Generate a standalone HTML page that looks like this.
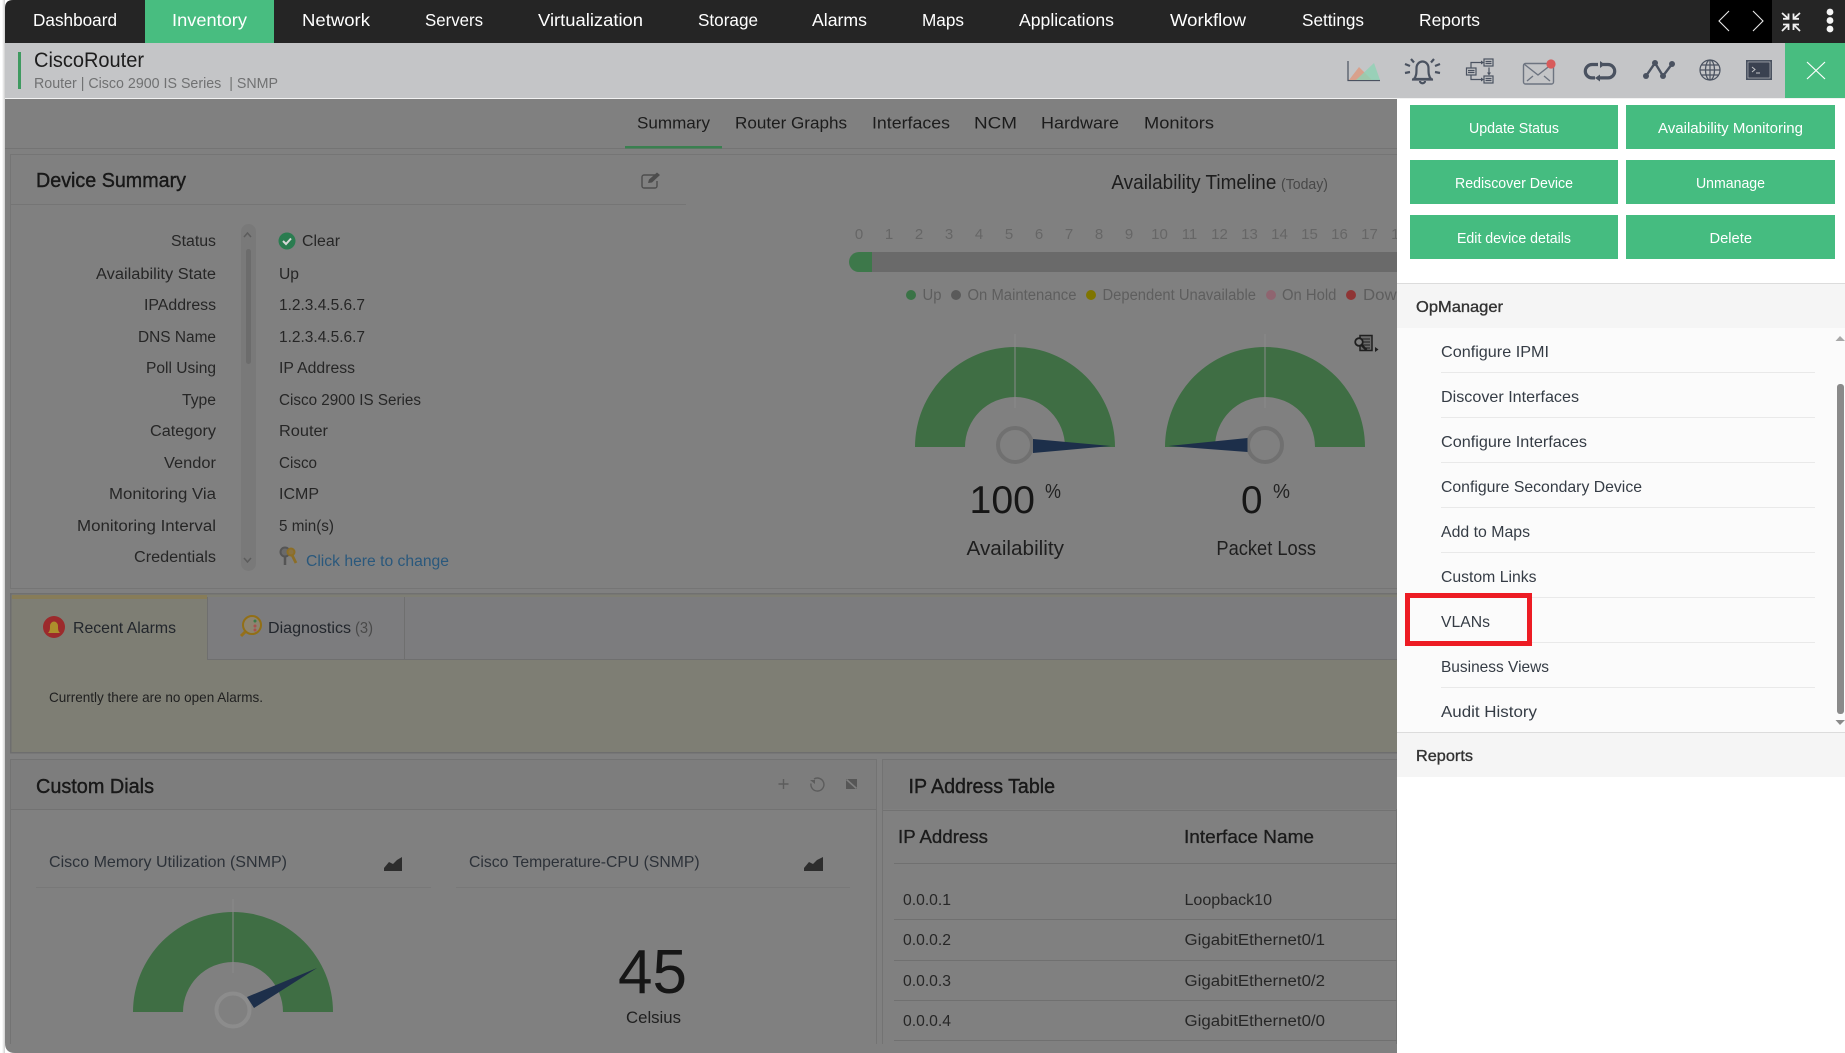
<!DOCTYPE html>
<html><head><meta charset="utf-8"><title>CiscoRouter</title>
<style>
html,body{margin:0;padding:0;width:1845px;height:1053px;overflow:hidden;background:#fff}
svg{display:block;position:absolute;left:0;top:0}
text{font-family:"Liberation Sans",sans-serif;white-space:pre}
.n{font-size:17.5px;fill:#fff}
.l{font-size:15.5px;fill:#262626}
.t{font-size:16.5px;fill:#1c1c1c}
.h{font-size:20.5px;fill:#181818;stroke:#181818;stroke-width:.4px}
.b{font-size:15px;fill:#fff}
.m{font-size:16px;fill:#353c45}
.mh{font-size:16px;fill:#333;stroke:#333;stroke-width:.35px}
.hr{font-size:15px;fill:#666}
.lg{font-size:15.5px;fill:#5e5e5e}
.i{fill:none;stroke:#4a5260;stroke-width:1.6}
</style></head><body>
<svg width="1845" height="1053" viewBox="0 0 1845 1053" xmlns="http://www.w3.org/2000/svg">
<defs>
<clipPath id="main"><rect x="5" y="99" width="1392" height="954"/></clipPath>
<linearGradient id="sh" x1="0" x2="1"><stop offset="0" stop-color="#fff"/><stop offset="1" stop-color="#cfcfcf"/></linearGradient>
</defs>
<rect width="1845" height="1053" fill="#fff"/>
<rect x="2" y="0" width="3" height="1053" fill="url(#sh)"/>
<path d="M5 99H1397V1053H15Q5 1053 5 1043Z" fill="#808080"/>
<!-- nav -->
<path d="M5 43V8Q5 0 13 0H1845V43Z" fill="#252525"/>
<rect x="145" y="0" width="129" height="43" fill="#48bd80"/>
<rect x="1710" y="0" width="62" height="43" fill="#000"/>
<g>
<text class="n" x="33" y="26" textLength="84" lengthAdjust="spacingAndGlyphs">Dashboard</text>
<text class="n" x="172" y="26" textLength="75" lengthAdjust="spacingAndGlyphs">Inventory</text>
<text class="n" x="302" y="26" textLength="68" lengthAdjust="spacingAndGlyphs">Network</text>
<text class="n" x="425" y="26" textLength="58" lengthAdjust="spacingAndGlyphs">Servers</text>
<text class="n" x="538" y="26" textLength="105" lengthAdjust="spacingAndGlyphs">Virtualization</text>
<text class="n" x="698" y="26" textLength="60" lengthAdjust="spacingAndGlyphs">Storage</text>
<text class="n" x="812" y="26" textLength="55" lengthAdjust="spacingAndGlyphs">Alarms</text>
<text class="n" x="922" y="26" textLength="42" lengthAdjust="spacingAndGlyphs">Maps</text>
<text class="n" x="1019" y="26" textLength="95" lengthAdjust="spacingAndGlyphs">Applications</text>
<text class="n" x="1170" y="26" textLength="76" lengthAdjust="spacingAndGlyphs">Workflow</text>
<text class="n" x="1302" y="26" textLength="62" lengthAdjust="spacingAndGlyphs">Settings</text>
<text class="n" x="1419" y="26" textLength="61" lengthAdjust="spacingAndGlyphs">Reports</text>
</g>
<g fill="none" stroke="#e8e8e8" stroke-width="1.1">
<path d="M1729 11L1719 21L1729 31"/>
<path d="M1753 11L1763 21L1753 31"/>
</g>
<g fill="none" stroke="#f0f0f0" stroke-width="1.8">
<path d="M1782 13L1788.500 18.800M1788.500 13.500V18.800H1783"/>
<path d="M1800 13L1793.500 18.800M1793.500 13.500V18.800H1799"/>
<path d="M1782 31L1788.500 24.500M1788.500 30V24.500H1783"/>
<path d="M1800 31L1793.500 24.500M1793.500 30V24.500H1799"/>
</g>
<g fill="#f4f4f4"><circle cx="1830" cy="12" r="3.400"/><circle cx="1830" cy="20.500" r="3.400"/><circle cx="1830" cy="29" r="3.400"/></g>
<!-- header band -->
<rect x="5" y="43" width="1840" height="55" fill="#c4c5c7"/>
<rect x="5" y="98" width="1840" height="1" fill="#f2f2f2"/>
<rect x="18" y="52" width="3" height="37" fill="#3f9a60"/>
<text x="34" y="67" font-size="21" fill="#1d1d1d" textLength="110" lengthAdjust="spacingAndGlyphs">CiscoRouter</text>
<text x="34" y="88" font-size="15" fill="#707172" textLength="244" lengthAdjust="spacingAndGlyphs">Router | Cisco 2900 IS Series  | SNMP</text>
<!-- header icons -->
<path d="M1348 61V80.500H1380" fill="none" stroke="#4a5260" stroke-width="1.200"/>
<path d="M1349 80L1359 67L1372 80Z" fill="#d9a18c"/>
<path d="M1356 80L1374 63L1380 80Z" fill="#8ed2b4" fill-opacity=".8"/>
<path class="i" d="M1414 79c2.500-3 2.500-6 2.500-11a6 6.500 0 0 1 12 0c0 5 0 8 2.500 11zM1412 79.500h21M1420 81c0 3 5 3 5 0" style="stroke-width:2.200"/>
<path class="i" d="M1405 64l5 2M1411 59l3 3.500M1434 59l-3 3.500M1440 64l-5 2M1405 73l5-1M1440 73l-5-1" style="stroke-width:2.200"/>
<g fill="none" stroke="#4a5260" stroke-width="1.200">
<rect x="1484" y="59" width="9" height="7"/><rect x="1466.500" y="68" width="9.500" height="7"/><rect x="1484" y="76" width="9" height="7"/>
<path d="M1485.500 61.500h6M1485.500 63.500h6M1468 70.500h6.500M1468 72.500h6.500M1485.500 78.500h6M1485.500 80.500h6"/>
<path d="M1471 68v-5.500h10M1471 75v4.500h10M1489 67.500v7"/>
</g>
<path d="M1481 60.500l3 2-3 2zM1481 77.500l3 2-3 2zM1487 72.500h4l-2 3z" fill="#4a5260"/>
<g fill="none" stroke="#6d7480" stroke-width="1.400"><rect x="1523.500" y="63.500" width="30" height="20.500" rx="2"/><path d="M1524 64L1538 75L1552 64M1527 81l6-5M1550 81l-6-5"/></g>
<circle cx="1551" cy="64" r="4.600" fill="#d85b5b"/>
<path d="M1598 64.500H1592a6.700 6.700 0 0 0 0 13.400H1595M1600 77.900H1608a6.700 6.700 0 0 0 0-13.400H1603" fill="none" stroke="#4a5260" stroke-width="3.200"/>
<path d="M1600 61l5 3.500-5 3.500zM1600 74.500l-5 3.500 5 3.500z" fill="#4a5260"/>
<path d="M1646 76L1655 63L1663 76L1672 64" fill="none" stroke="#4a5260" stroke-width="2.400"/>
<g fill="#4a5260"><circle cx="1646" cy="76" r="3"/><circle cx="1655" cy="63" r="3"/><circle cx="1663" cy="76" r="3"/><circle cx="1672" cy="64" r="3"/></g>
<g fill="none" stroke="#4a5260" stroke-width="1.200"><circle cx="1710" cy="70" r="10"/><ellipse cx="1710" cy="70" rx="4.500" ry="10"/><path d="M1710 60v20M1700 70h20M1701.500 65h17M1701.500 75h17"/></g>
<rect x="1746" y="60" width="26" height="20" fill="#4a5260"/><rect x="1748" y="62" width="22" height="16" fill="#3a4150" stroke="#c4c5c7" stroke-width=".6"/>
<path d="M1752 67l3 2.500-3 2.500M1756 73h4" fill="none" stroke="#c4c5c7" stroke-width="1"/>
<rect x="1785" y="43" width="60" height="55" fill="#48bd80"/>
<path d="M1807 62L1825 79M1825 62L1807 79" stroke="#fff" stroke-width="1.200"/>

<!-- main content -->
<g clip-path="url(#main)">
<rect x="5" y="148" width="1392" height="1" fill="#747474"/>
<rect x="625" y="146" width="97" height="2.500" fill="#3a8050"/>
<text class="t" x="637" y="128.500" textLength="73" lengthAdjust="spacingAndGlyphs">Summary</text>
<text class="t" x="735" y="128.500" textLength="112" lengthAdjust="spacingAndGlyphs">Router Graphs</text>
<text class="t" x="872" y="128.500" textLength="78" lengthAdjust="spacingAndGlyphs">Interfaces</text>
<text class="t" x="974" y="128.500" textLength="43" lengthAdjust="spacingAndGlyphs">NCM</text>
<text class="t" x="1041" y="128.500" textLength="78" lengthAdjust="spacingAndGlyphs">Hardware</text>
<text class="t" x="1144" y="128.500" textLength="70" lengthAdjust="spacingAndGlyphs">Monitors</text>
<!-- Device Summary panel -->
<path d="M1397 154.500H10.500V588.500H1397" fill="none" stroke="#757575"/>
<rect x="11" y="204" width="675" height="1" fill="#757575"/>
<text class="h" x="36" y="187" textLength="150" lengthAdjust="spacingAndGlyphs">Device Summary</text>
<path d="M655 175h-11a2 2 0 0 0-2 2v9a2 2 0 0 0 2 2h11a2 2 0 0 0 2-2v-5" fill="none" stroke="#4d4d4d" stroke-width="1.400"/>
<path d="M648 183l1-3.500 8-7 3 2.500-8 7.500z" fill="#4d4d4d"/>
<!-- rows -->
<text class="l" x="171" y="246" textLength="45" lengthAdjust="spacingAndGlyphs">Status</text>
<text class="l" x="96" y="279" textLength="120" lengthAdjust="spacingAndGlyphs">Availability State</text>
<text class="l" x="144" y="310" textLength="72" lengthAdjust="spacingAndGlyphs">IPAddress</text>
<text class="l" x="138" y="342" textLength="78" lengthAdjust="spacingAndGlyphs">DNS Name</text>
<text class="l" x="146" y="373" textLength="70" lengthAdjust="spacingAndGlyphs">Poll Using</text>
<text class="l" x="182" y="405" textLength="34" lengthAdjust="spacingAndGlyphs">Type</text>
<text class="l" x="150" y="436" textLength="66" lengthAdjust="spacingAndGlyphs">Category</text>
<text class="l" x="164" y="468" textLength="52" lengthAdjust="spacingAndGlyphs">Vendor</text>
<text class="l" x="109" y="499" textLength="107" lengthAdjust="spacingAndGlyphs">Monitoring Via</text>
<text class="l" x="77" y="531" textLength="139" lengthAdjust="spacingAndGlyphs">Monitoring Interval</text>
<text class="l" x="134" y="562" textLength="82" lengthAdjust="spacingAndGlyphs">Credentials</text>
<circle cx="287" cy="241" r="8.500" fill="#2a7c50"/><path d="M283 241l3 3 5-5.500" fill="none" stroke="#d8d8d8" stroke-width="2"/>
<text class="l" x="302" y="246" textLength="38" lengthAdjust="spacingAndGlyphs">Clear</text>
<text class="l" x="279" y="279" textLength="20" lengthAdjust="spacingAndGlyphs">Up</text>
<text class="l" x="279" y="310" textLength="86" lengthAdjust="spacingAndGlyphs">1.2.3.4.5.6.7</text>
<text class="l" x="279" y="342" textLength="86" lengthAdjust="spacingAndGlyphs">1.2.3.4.5.6.7</text>
<text class="l" x="279" y="373" textLength="76" lengthAdjust="spacingAndGlyphs">IP Address</text>
<text class="l" x="279" y="405" textLength="142" lengthAdjust="spacingAndGlyphs">Cisco 2900 IS Series</text>
<text class="l" x="279" y="436" textLength="49" lengthAdjust="spacingAndGlyphs">Router</text>
<text class="l" x="279" y="468" textLength="38" lengthAdjust="spacingAndGlyphs">Cisco</text>
<text class="l" x="279" y="499" textLength="40" lengthAdjust="spacingAndGlyphs">ICMP</text>
<text class="l" x="279" y="531" textLength="55" lengthAdjust="spacingAndGlyphs">5 min(s)</text>
<circle cx="285" cy="552" r="4.500" fill="#6a6a6a" stroke="#555" stroke-width="2"/><path d="M285 556v9" stroke="#555" stroke-width="2.500"/>
<circle cx="291" cy="552" r="3.500" fill="#8a7240" stroke="#8c6e26" stroke-width="2"/><path d="M292 555l4 8" stroke="#8c6e26" stroke-width="2.800"/>
<text class="l" x="306" y="566" style="fill:#2a587c" textLength="143" lengthAdjust="spacingAndGlyphs">Click here to change</text>
<rect x="241" y="224" width="15" height="347" rx="7.500" fill="#797979"/>
<rect x="246" y="249" width="5" height="115" rx="2.500" fill="#6c6c6c"/>
<path d="M244 237l3.500-4 3.500 4M244 558l3.500 4 3.500-4" fill="none" stroke="#5c5c5c" stroke-width="1.500"/>
<!-- timeline -->
<text x="1111.400" y="189" font-size="20" fill="#1d1d1d" textLength="165" lengthAdjust="spacingAndGlyphs">Availability Timeline</text>
<text x="1281" y="189" font-size="15" fill="#474747" textLength="47" lengthAdjust="spacingAndGlyphs">(Today)</text>
<g text-anchor="middle">
<text class="hr" x="859" y="239">0</text><text class="hr" x="889" y="239">1</text><text class="hr" x="919" y="239">2</text><text class="hr" x="949" y="239">3</text><text class="hr" x="979" y="239">4</text><text class="hr" x="1009" y="239">5</text><text class="hr" x="1039" y="239">6</text><text class="hr" x="1069" y="239">7</text><text class="hr" x="1099" y="239">8</text><text class="hr" x="1129" y="239">9</text><text class="hr" x="1159.500" y="239">10</text><text class="hr" x="1189.500" y="239">11</text><text class="hr" x="1219.500" y="239">12</text><text class="hr" x="1249.500" y="239">13</text><text class="hr" x="1279.500" y="239">14</text><text class="hr" x="1309.500" y="239">15</text><text class="hr" x="1339.500" y="239">16</text><text class="hr" x="1369.500" y="239">17</text><text class="hr" x="1399.500" y="239">18</text>
</g>
<rect x="860" y="252" width="537" height="20" fill="#6a6a6a"/>
<path d="M872 252H859a10 10 0 0 0 0 20H872Z" fill="#3d784a"/>
<circle cx="911" cy="295" r="5" fill="#3a7346"/><text class="lg" x="922.500" y="300" textLength="19" lengthAdjust="spacingAndGlyphs">Up</text>
<circle cx="956" cy="295" r="5" fill="#5a5a5a"/><text class="lg" x="967.500" y="300" textLength="109" lengthAdjust="spacingAndGlyphs">On Maintenance</text>
<circle cx="1091" cy="295" r="5" fill="#7f7500"/><text class="lg" x="1102.500" y="300" textLength="153.500" lengthAdjust="spacingAndGlyphs">Dependent Unavailable</text>
<circle cx="1271" cy="295" r="5" fill="#8f6570"/><text class="lg" x="1282" y="300" textLength="54.400" lengthAdjust="spacingAndGlyphs">On Hold</text>
<circle cx="1351" cy="295" r="5" fill="#8f3535"/><text class="lg" x="1363" y="300" textLength="43" lengthAdjust="spacingAndGlyphs">Down</text>
<!-- gauges -->
<path d="M915 447a100 100 0 0 1 200 0H1065a50 50 0 0 0-100 0Z" fill="#3f6e44"/>
<rect x="1014.500" y="334" width="1" height="74" fill="#8a8a8a"/>
<circle cx="1015" cy="445" r="17" fill="#808080" stroke="#707070" stroke-width="4"/>
<path d="M1033 439L1111 446L1033 453Z" fill="#1d2f4a"/>
<path d="M1165 447a100 100 0 0 1 200 0H1315a50 50 0 0 0-100 0Z" fill="#3f6e44"/>
<rect x="1264.500" y="334" width="1" height="74" fill="#8a8a8a"/>
<circle cx="1265" cy="445" r="17" fill="#808080" stroke="#707070" stroke-width="4"/>
<path d="M1247.500 438L1168.500 446L1247.500 452Z" fill="#1d2f4a"/>
<text x="969.500" y="513" font-size="39" fill="#161616" textLength="65.500" lengthAdjust="spacingAndGlyphs">100</text>
<text x="1045" y="498" font-size="20" fill="#222" textLength="16" lengthAdjust="spacingAndGlyphs">%</text>
<text x="1241" y="513" font-size="39" fill="#161616" textLength="21.500" lengthAdjust="spacingAndGlyphs">0</text>
<text x="1273" y="498" font-size="20" fill="#222" textLength="17" lengthAdjust="spacingAndGlyphs">%</text>
<text x="966.500" y="555" font-size="20" fill="#1f1f1f" textLength="97.500" lengthAdjust="spacingAndGlyphs">Availability</text>
<text x="1216.400" y="555" font-size="20" fill="#1f1f1f" textLength="99.600" lengthAdjust="spacingAndGlyphs">Packet Loss</text>
<!-- report icon -->
<rect x="1360" y="335.500" width="12" height="15" fill="#6a6a6a" stroke="#1f1f1f" stroke-width="1.500"/>
<path d="M1362 339h8M1362 342h8M1363 345h7M1365 348h5" stroke="#1f1f1f" stroke-width="1"/>
<circle cx="1359" cy="342" r="3.800" fill="#808080" stroke="#1f1f1f" stroke-width="1.800"/>
<path d="M1361.500 345l5 5" stroke="#1f1f1f" stroke-width="2.400"/>
<path d="M1375 347l3.500 2.500-3.500 2.500z" fill="#1f1f1f"/>
<!-- Alarms -->
<rect x="11" y="594" width="1386" height="159" fill="#7e7e74"/>
<rect x="207" y="597" width="1190" height="62" fill="#7c7c7e"/>
<rect x="207" y="659" width="1190" height="1" fill="#6f6f6f"/>
<rect x="207" y="597" width="1" height="62" fill="#6f6f6f"/>
<rect x="404" y="597" width="1" height="62" fill="#6f6f6f"/>
<rect x="10" y="593" width="1387" height="1.500" fill="#707070"/>
<rect x="10" y="593" width="1.500" height="160" fill="#6e6e6e"/>
<rect x="10" y="752" width="1387" height="1.500" fill="#6e6e6e"/>
<rect x="12" y="595" width="195" height="4" fill="#877c58"/>
<circle cx="54" cy="627" r="11" fill="#9c2a2c"/>
<path d="M48 633c2-2 2-4 2-7a4 4.500 0 0 1 8 0c0 3 0 5 2 7z" fill="#ad8f2c"/>
<text class="l" x="73" y="633" style="font-size:16px;fill:#22262c" textLength="103" lengthAdjust="spacingAndGlyphs">Recent Alarms</text>
<circle cx="252" cy="625" r="9" fill="#8d8470" stroke="#926f16" stroke-width="2"/>
<path d="M245 632l-4 4" stroke="#96701a" stroke-width="3"/>
<circle cx="255" cy="621" r="1.500" fill="#3a7a4a"/><circle cx="255" cy="626" r="1.500" fill="#a85050"/><circle cx="255" cy="630" r="1.500" fill="#a85050"/>
<text class="l" x="268" y="633" style="font-size:16px;fill:#22262c" textLength="83" lengthAdjust="spacingAndGlyphs">Diagnostics</text>
<text class="l" x="355" y="633" style="font-size:16px;fill:#4a4a4a" textLength="18" lengthAdjust="spacingAndGlyphs">(3)</text>
<text x="49" y="702" font-size="14" fill="#1f1f1f" textLength="214" lengthAdjust="spacingAndGlyphs">Currently there are no open Alarms.</text>
<!-- Custom Dials panel -->
<rect x="10.500" y="759.500" width="866" height="300" fill="#808080" stroke="#737373"/>
<rect x="11" y="760" width="865" height="49" fill="#7d7d7d"/>
<rect x="11" y="809" width="865" height="1" fill="#727272"/>
<text class="h" x="36" y="793" textLength="118" lengthAdjust="spacingAndGlyphs">Custom Dials</text>
<path d="M778.500 784h10M783.500 779v10" stroke="#5c5c5c" stroke-width="1.400"/>
<path d="M814 779a6.500 6.500 0 1 1-3 4.500" fill="none" stroke="#5c5c5c" stroke-width="1.400"/><path d="M810 780h5v4z" fill="#5c5c5c"/>
<rect x="846" y="779" width="11" height="10" fill="#565656"/><path d="M846.500 779.500L856.500 788.500" stroke="#808080" stroke-width="1.600"/>
<text class="l" x="49" y="867" style="font-size:16px;fill:#2c3138" textLength="238" lengthAdjust="spacingAndGlyphs">Cisco Memory Utilization (SNMP)</text>
<path d="M384 871V868L389 862L393 864L397 860L402 857V871Z" fill="#2d2d2d"/>
<rect x="36" y="887" width="395" height="1" fill="#787878"/>
<text class="l" x="469" y="867" style="font-size:16px;fill:#2c3138" textLength="230.600" lengthAdjust="spacingAndGlyphs">Cisco Temperature-CPU (SNMP)</text>
<path d="M804 871V868L809 862L813 864L817 860L823 857V871Z" fill="#2d2d2d"/>
<rect x="456" y="887" width="394" height="1" fill="#787878"/>
<path d="M133 1012a100 100 0 0 1 200 0H283a50 50 0 0 0-100 0Z" fill="#3f6e44"/>
<rect x="232.500" y="899" width="1" height="74" fill="#8a8a8a"/>
<circle cx="233" cy="1010" r="16.500" fill="#808080" stroke="#8c8c8c" stroke-width="4"/>
<path d="M247 997L317 968L254 1008Z" fill="#1d2f4a"/>
<text x="618" y="993" font-size="62" fill="#161616" textLength="69" lengthAdjust="spacingAndGlyphs">45</text>
<text x="626" y="1023" font-size="17" fill="#1f1f1f" textLength="55" lengthAdjust="spacingAndGlyphs">Celsius</text>
<!-- IP table -->
<rect x="882.500" y="759.500" width="514" height="300" fill="#808080" stroke="#737373"/>
<rect x="883" y="760" width="514" height="49" fill="#7d7d7d"/>
<rect x="883" y="810" width="514" height="1" fill="#727272"/>
<text class="h" x="908.500" y="793" textLength="146.500" lengthAdjust="spacingAndGlyphs">IP Address Table</text>
<text x="898" y="843" font-size="18" fill="#1b1b1b" stroke="#1b1b1b" stroke-width=".3" textLength="90" lengthAdjust="spacingAndGlyphs">IP Address</text>
<text x="1184" y="843" font-size="18" fill="#1b1b1b" stroke="#1b1b1b" stroke-width=".3" textLength="130" lengthAdjust="spacingAndGlyphs">Interface Name</text>
<rect x="894" y="863" width="503" height="1" fill="#707070"/>
<rect x="894" y="919" width="503" height="1" fill="#707070"/>
<rect x="894" y="960" width="503" height="1" fill="#707070"/>
<rect x="894" y="1000" width="503" height="1" fill="#707070"/>
<rect x="894" y="1040" width="503" height="1" fill="#707070"/>
<text class="l" x="903" y="905" textLength="48" lengthAdjust="spacingAndGlyphs">0.0.0.1</text>
<text class="l" x="903" y="945" textLength="48" lengthAdjust="spacingAndGlyphs">0.0.0.2</text>
<text class="l" x="903" y="986" textLength="48" lengthAdjust="spacingAndGlyphs">0.0.0.3</text>
<text class="l" x="903" y="1026" textLength="48" lengthAdjust="spacingAndGlyphs">0.0.0.4</text>
<text class="l" x="1184.500" y="905" textLength="87.500" lengthAdjust="spacingAndGlyphs">Loopback10</text>
<text class="l" x="1184.500" y="945" textLength="140.500" lengthAdjust="spacingAndGlyphs">GigabitEthernet0/1</text>
<text class="l" x="1184.500" y="986" textLength="140.500" lengthAdjust="spacingAndGlyphs">GigabitEthernet0/2</text>
<text class="l" x="1184.500" y="1026" textLength="140.500" lengthAdjust="spacingAndGlyphs">GigabitEthernet0/0</text>
<rect x="5" y="1044" width="1392" height="9" fill="#808080"/>
</g>
<path d="M5 1043V1053H15Q5 1053 5 1043Z" fill="#fff"/>
<!-- right panel -->
<rect x="1397" y="99" width="448" height="954" fill="#fff"/>
<g fill="#45bc80">
<rect x="1410" y="105" width="208" height="44"/><rect x="1626" y="105" width="209" height="44"/>
<rect x="1410" y="160" width="208" height="44"/><rect x="1626" y="160" width="209" height="44"/>
<rect x="1410" y="215" width="208" height="44"/><rect x="1626" y="215" width="209" height="44"/>
</g>
<text class="b" x="1469" y="133" textLength="90" lengthAdjust="spacingAndGlyphs">Update Status</text>
<text class="b" x="1658" y="133" textLength="145" lengthAdjust="spacingAndGlyphs">Availability Monitoring</text>
<text class="b" x="1455" y="188" textLength="118" lengthAdjust="spacingAndGlyphs">Rediscover Device</text>
<text class="b" x="1696" y="188" textLength="69" lengthAdjust="spacingAndGlyphs">Unmanage</text>
<text class="b" x="1457" y="243" textLength="114" lengthAdjust="spacingAndGlyphs">Edit device details</text>
<text class="b" x="1709.500" y="243" textLength="42.500" lengthAdjust="spacingAndGlyphs">Delete</text>
<rect x="1397" y="283" width="448" height="45" fill="#f5f5f5"/>
<rect x="1397" y="283" width="448" height="1" fill="#dcdcdc"/>
<text class="mh" x="1416" y="312" textLength="87" lengthAdjust="spacingAndGlyphs">OpManager</text>
<rect x="1397" y="328" width="448" height="404" fill="#fbfbfb"/>
<g fill="#e9e9e9">
<rect x="1441" y="372" width="374" height="1"/><rect x="1441" y="417" width="374" height="1"/><rect x="1441" y="462" width="374" height="1"/><rect x="1441" y="507" width="374" height="1"/><rect x="1441" y="552" width="374" height="1"/><rect x="1441" y="597" width="374" height="1"/><rect x="1441" y="642" width="374" height="1"/><rect x="1441" y="687" width="374" height="1"/>
</g>
<text class="m" x="1441" y="357" textLength="108" lengthAdjust="spacingAndGlyphs">Configure IPMI</text>
<text class="m" x="1441" y="402" textLength="138" lengthAdjust="spacingAndGlyphs">Discover Interfaces</text>
<text class="m" x="1441" y="447" textLength="146" lengthAdjust="spacingAndGlyphs">Configure Interfaces</text>
<text class="m" x="1441" y="492" textLength="201" lengthAdjust="spacingAndGlyphs">Configure Secondary Device</text>
<text class="m" x="1441" y="537" textLength="89" lengthAdjust="spacingAndGlyphs">Add to Maps</text>
<text class="m" x="1441" y="582" textLength="95.500" lengthAdjust="spacingAndGlyphs">Custom Links</text>
<text class="m" x="1441" y="627" textLength="49" lengthAdjust="spacingAndGlyphs">VLANs</text>
<text class="m" x="1441" y="672" textLength="108" lengthAdjust="spacingAndGlyphs">Business Views</text>
<text class="m" x="1441" y="717" textLength="96" lengthAdjust="spacingAndGlyphs">Audit History</text>
<rect x="1407.500" y="595.500" width="122" height="48" fill="none" stroke="#ed1c24" stroke-width="5"/>
<path d="M1835.500 341L1840 336L1845 341Z" fill="#a8a8a8"/>
<rect x="1837" y="384" width="7" height="330" rx="3" fill="#8a8a8a"/>
<path d="M1835.500 720H1845L1840 725Z" fill="#8a8a8a"/>
<rect x="1397" y="732" width="448" height="45" fill="#f5f5f5"/>
<rect x="1397" y="732" width="448" height="1" fill="#dcdcdc"/>
<text class="mh" x="1416" y="761" textLength="57" lengthAdjust="spacingAndGlyphs">Reports</text>
</svg>
</body></html>
